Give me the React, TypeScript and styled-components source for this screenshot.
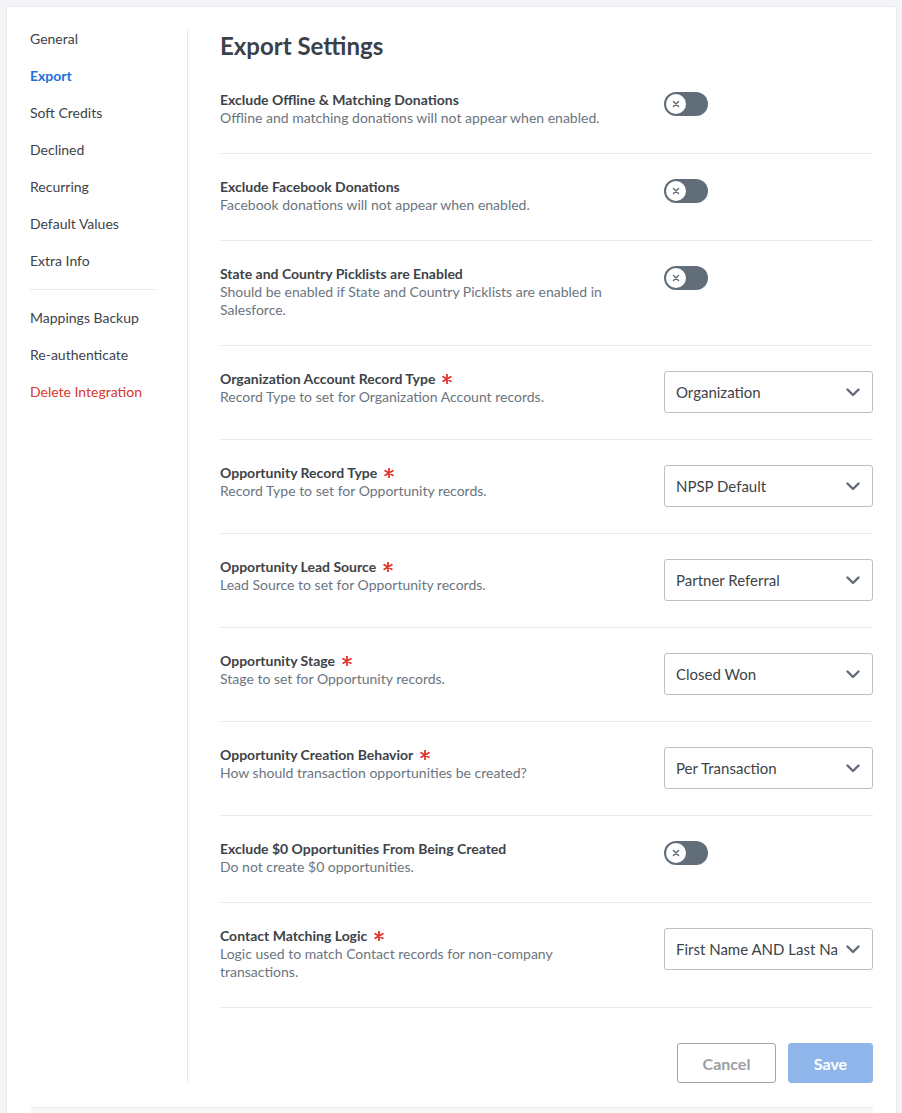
import React from "react";
import styled, { createGlobalStyle } from "styled-components";

const GlobalStyle = createGlobalStyle`
  html, body {
    margin: 0;
    padding: 0;
    background: #f4f5f7;
    font-family: Lato, "Open Sans", sans-serif;
    color: #3d4349;
  }
  * { box-sizing: border-box; }
`;

type ToggleRow = { kind: "toggle"; title: string; desc: string };
type SelectRow = { kind: "select"; title: string; desc: string; value: string };
type Row = ToggleRow | SelectRow;

const rows: Row[] = [
  {
    kind: "toggle",
    title: "Exclude Offline & Matching Donations",
    desc: "Offline and matching donations will not appear when enabled.",
  },
  {
    kind: "toggle",
    title: "Exclude Facebook Donations",
    desc: "Facebook donations will not appear when enabled.",
  },
  {
    kind: "toggle",
    title: "State and Country Picklists are Enabled",
    desc: "Should be enabled if State and Country Picklists are enabled in Salesforce.",
  },
  {
    kind: "select",
    title: "Organization Account Record Type",
    desc: "Record Type to set for Organization Account records.",
    value: "Organization",
  },
  {
    kind: "select",
    title: "Opportunity Record Type",
    desc: "Record Type to set for Opportunity records.",
    value: "NPSP Default",
  },
  {
    kind: "select",
    title: "Opportunity Lead Source",
    desc: "Lead Source to set for Opportunity records.",
    value: "Partner Referral",
  },
  {
    kind: "select",
    title: "Opportunity Stage",
    desc: "Stage to set for Opportunity records.",
    value: "Closed Won",
  },
  {
    kind: "select",
    title: "Opportunity Creation Behavior",
    desc: "How should transaction opportunities be created?",
    value: "Per Transaction",
  },
  {
    kind: "toggle",
    title: "Exclude $0 Opportunities From Being Created",
    desc: "Do not create $0 opportunities.",
  },
  {
    kind: "select",
    title: "Contact Matching Logic",
    desc: "Logic used to match Contact records for non-company transactions.",
    value: "First Name AND Last Name",
  },
];

const navTop = ["General", "Export", "Soft Credits", "Declined", "Recurring", "Default Values", "Extra Info"];
const navBottom = ["Mappings Backup", "Re-authenticate"];

const Card = styled.div`
  margin: 6px 5px 0 6px;
  background: #fff;
  border: 1px solid #e9ebee;
  border-bottom: none;
  border-radius: 3px 3px 0 0;
  padding: 23px 23px 0 23px;
  min-height: 1107px;
`;

const Layout = styled.div`
  display: flex;
  align-items: stretch;
`;

const Sidebar = styled.nav`
  width: 158px;
  flex-shrink: 0;
  padding-right: 32px;
  border-right: 1px solid #e6e8eb;
`;

const NavItem = styled.div<{ tone?: "active" | "danger" }>`
  font-size: 14px;
  line-height: 17px;
  margin-bottom: 20px;
  color: ${({ tone }) =>
    tone === "active" ? "#1f6fd8" : tone === "danger" ? "#d9382c" : "#3d4349"};
  font-weight: ${({ tone }) => (tone === "active" ? 700 : 400)};
  cursor: pointer;
`;

const NavDivider = styled.div`
  height: 1px;
  background: #e6e8eb;
  margin: 0 0 19px 0;
`;

const Main = styled.main`
  flex: 1;
  padding-left: 32px;
`;

const Heading = styled.h1`
  margin: 0 0 5px 0;
  font-size: 24px;
  line-height: 32px;
  font-weight: 700;
  color: #3b4148;
`;

const SettingRow = styled.div`
  display: flex;
  align-items: flex-start;
  justify-content: space-between;
  gap: 24px;
  padding: 24px 0 26px 0;
  border-bottom: 1px solid #e6e8eb;
`;

const TextCol = styled.div`
  flex: 1;
  max-width: 400px;
  min-width: 0;
`;

const Title = styled.div`
  display: flex;
  align-items: center;
  gap: 7px;
  font-size: 14px;
  line-height: 18px;
  font-weight: 700;
  color: #3d4349;
`;

const Desc = styled.div`
  font-size: 14px;
  line-height: 18px;
  color: #6b7580;
`;

const Control = styled.div`
  width: 209px;
  flex-shrink: 0;
  padding-top: 1px;
`;

const Track = styled.div`
  width: 44px;
  height: 24px;
  border-radius: 12px;
  background: #616d78;
  padding: 2px;
  display: flex;
  align-items: center;
`;

const Knob = styled.div`
  width: 20px;
  height: 20px;
  border-radius: 50%;
  background: #fff;
  display: flex;
  align-items: center;
  justify-content: center;
`;

const SelectBox = styled.div`
  height: 42px;
  border: 1px solid #b8c1c8;
  border-radius: 3px;
  display: flex;
  align-items: center;
  padding: 0 12px 0 11px;
  gap: 8px;
`;

const SelectValue = styled.span`
  flex: 1;
  font-size: 15px;
  color: #3d4349;
  white-space: nowrap;
  overflow: hidden;
`;

const Actions = styled.div`
  display: flex;
  justify-content: flex-end;
  gap: 12px;
  padding-top: 35px;
`;

const Button = styled.button<{ primary?: boolean }>`
  height: 40px;
  padding: 0 ${({ primary }) => (primary ? "21px" : "24px")};
  min-width: ${({ primary }) => (primary ? "85px" : "99px")};
  border-radius: 3px;
  font-family: inherit;
  font-size: 16px;
  font-weight: 700;
  border: 1px solid ${({ primary }) => (primary ? "#8fb5ea" : "#9ea4a9")};
  background: ${({ primary }) => (primary ? "#8fb5ea" : "#fff")};
  color: ${({ primary }) => (primary ? "#fff" : "#9aa0a6")};
`;

const Footer = styled.div`
  margin: 24px 0 0 1px;
  height: 40px;
  background: #f6f7f9;
  border-top: 1px solid #eceef1;
`;

const RequiredMark = () => (
  <svg width="10" height="10" viewBox="0 0 10 10" aria-label="required">
    <path
      d="M5 0.6 V9.4 M1.2 2.8 L8.8 7.2 M8.8 2.8 L1.2 7.2"
      stroke="#e0352b"
      strokeWidth="1.8"
      strokeLinecap="round"
    />
  </svg>
);

const Toggle = () => (
  <Track>
    <Knob>
      <svg width="8" height="8" viewBox="0 0 8 8">
        <path d="M1.5 1.5 L6.5 6.5 M6.5 1.5 L1.5 6.5" stroke="#616d78" strokeWidth="1.5" strokeLinecap="round" />
      </svg>
    </Knob>
  </Track>
);

const Select = ({ value }: { value: string }) => (
  <SelectBox>
    <SelectValue>{value}</SelectValue>
    <svg width="14" height="9" viewBox="0 0 14 9">
      <path d="M1.5 1.5 L7 7 L12.5 1.5" fill="none" stroke="#5f6b76" strokeWidth="2.4" strokeLinecap="round" strokeLinejoin="round" />
    </svg>
  </SelectBox>
);

export default function App() {
  return (
    <>
      <GlobalStyle />
      <Card>
        <Layout>
          <Sidebar>
            {navTop.map((n) => (
              <NavItem key={n} tone={n === "Export" ? "active" : undefined}>
                {n}
              </NavItem>
            ))}
            <NavDivider />
            {navBottom.map((n) => (
              <NavItem key={n}>{n}</NavItem>
            ))}
            <NavItem tone="danger">Delete Integration</NavItem>
          </Sidebar>
          <Main>
            <Heading>Export Settings</Heading>
            {rows.map((r) => (
              <SettingRow key={r.title}>
                <TextCol>
                  <Title>
                    <span>{r.title}</span>
                    {r.kind === "select" && <RequiredMark />}
                  </Title>
                  <Desc>{r.desc}</Desc>
                </TextCol>
                <Control>{r.kind === "toggle" ? <Toggle /> : <Select value={r.value} />}</Control>
              </SettingRow>
            ))}
            <Actions>
              <Button>Cancel</Button>
              <Button primary>Save</Button>
            </Actions>
          </Main>
        </Layout>
        <Footer />
      </Card>
    </>
  );
}
